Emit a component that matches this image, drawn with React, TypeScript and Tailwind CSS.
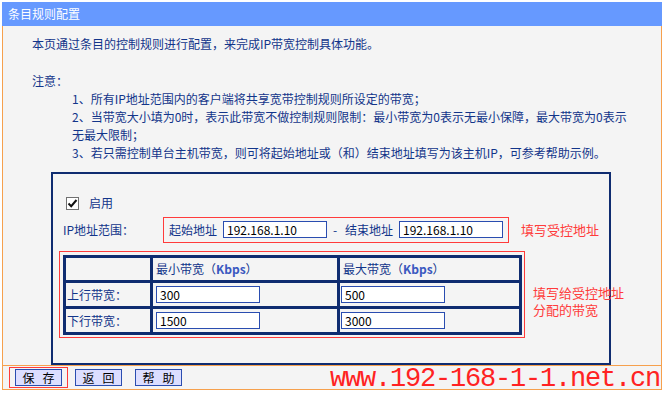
import React from "react";

const navy = "text-[#12358A]";

function Field({ value, w = "w-[104px]" }: { value: string; w?: string }) {
    return (
        <input
            readOnly
            value={value}
            className={`h-[17px] ${w} border border-[#2A4DB0] bg-white px-[3px] text-[12px] leading-[15px] text-black outline-none`}
        />
    );
}

function Btn({ a, b }: { a: string; b: string }) {
    return (
        <button className="flex h-[17px] w-[47px] items-center justify-center gap-[8px] border border-[#2A4DB0] bg-[#DCDEFF] text-[12px] leading-none text-black">
            <span>{a}</span>
            <span>{b}</span>
        </button>
    );
}

export default function App() {
    return (
        <div className="relative h-[395px] w-[664px] overflow-hidden bg-white font-['Noto_Sans_CJK_SC',sans-serif] text-[12px]">
            <div className="ml-[2px] mt-[2px] w-[660px]">
                {/* title bar */}
                <div className="flex h-[24px] items-center bg-[#6699FF] pl-[6px] text-[12px] text-white">
                    条目规则配置
                </div>

                {/* body */}
                <div className={`border-l border-r border-[#F6A04D] bg-[#F4F4F4] pt-[9px] ${navy}`}>
                    <div className="pl-[29px] leading-[18px]">
                        本页通过条目的控制规则进行配置，来完成IP带宽控制具体功能。
                    </div>
                    <div className="mt-[19px] pl-[29px] leading-[18px]">注意：</div>
                    <div className="whitespace-nowrap pl-[69px] leading-[18px]">
                        <div>1、所有IP地址范围内的客户端将共享宽带控制规则所设定的带宽；</div>
                        <div>
                            2、当带宽大小填为0时，表示此带宽不做控制规则限制：最小带宽为0表示无最小保障，最大带宽为0表示
                        </div>
                        <div>无最大限制；</div>
                        <div>3、若只需控制单台主机带宽，则可将起始地址或（和）结束地址填写为该主机IP，可参考帮助示例。</div>
                    </div>

                    {/* rule box */}
                    <div className="ml-[48px] mt-[10px] w-[560px] border-2 border-[#0F2C70] pb-[25px] pt-[20px]">
                        <div className="flex h-[18px] items-center pl-[13px]">
                            <span className="flex h-[13px] w-[13px] items-center justify-center border border-[#707070] bg-white">
                                <svg width="11" height="11" viewBox="0 0 11 11">
                                    <path d="M1.5 5.5 L4.2 8.2 L9.5 2" fill="none" stroke="#111" strokeWidth="2" />
                                </svg>
                            </span>
                            <span className="ml-[10px]">启用</span>
                        </div>

                        <div className="mt-[5px] flex items-center">
                            <span className="ml-[10px] w-[100px]">IP地址范围：</span>
                            <div className="flex h-[26px] w-[346px] items-center border border-[#FF3B3B] pl-[5px]">
                                <span>起始地址</span>
                                <span className="ml-[6px]"><Field value="192.168.1.10" /></span>
                                <span className="ml-[6px] w-[12px]">-</span>
                                <span>结束地址</span>
                                <span className="ml-[6px]"><Field value="192.168.1.10" /></span>
                            </div>
                            <span className="ml-[12px] whitespace-nowrap text-[13px] text-[#FF3B3B]">填写受控地址</span>
                        </div>

                        <div className="mt-[8px] flex items-start">
                            <div className="ml-[6px] shrink-0 border border-[#FF3B3B] pb-[2px] pl-[3px] pr-[2px] pt-[3px]">
                                <div className="grid w-[459px] grid-cols-[84px_184px_179px] grid-rows-[22px_23px_23px] gap-[3px] bg-[#0F2C70] p-[3px]">
                                    <div className="bg-[#F4F4F4]" />
                                    <div className="flex items-center bg-[#F4F4F4] pl-[3px]">
                                        最小带宽（<span className="font-semibold text-[#3A58C0]">Kbps</span>）
                                    </div>
                                    <div className="flex items-center bg-[#F4F4F4] pl-[3px]">
                                        最大带宽（<span className="font-semibold text-[#3A58C0]">Kbps</span>）
                                    </div>
                                    <div className="flex items-center bg-[#F4F4F4] pl-[1px]">上行带宽：</div>
                                    <div className="flex items-center bg-[#F4F4F4] pl-[3px]"><Field value="300" /></div>
                                    <div className="flex items-center bg-[#F4F4F4] pl-[1px]"><Field value="500" /></div>
                                    <div className="flex items-center bg-[#F4F4F4] pl-[1px]">下行带宽：</div>
                                    <div className="flex items-center bg-[#F4F4F4] pl-[3px]"><Field value="1500" /></div>
                                    <div className="flex items-center bg-[#F4F4F4] pl-[1px]"><Field value="3000" /></div>
                                </div>
                            </div>
                            <div className="ml-[8px] mt-[33px] shrink-0 whitespace-nowrap text-[13px] leading-[17px] text-[#FF3B3B]">
                                填写给受控地址
                                <br />
                                分配的带宽
                            </div>
                        </div>
                    </div>
                </div>

                {/* buttons */}
                <div className="flex h-[25px] items-start border border-[#F6A04D] bg-[#F4F4F4]">
                    <div className="ml-[6px] mt-[1px] border border-[#FF3B3B] px-[5px] py-[1px]">
                        <Btn a="保" b="存" />
                    </div>
                    <div className="ml-[7px] mt-[3px]">
                        <Btn a="返" b="回" />
                    </div>
                    <div className="ml-[13px] mt-[3px]">
                        <Btn a="帮" b="助" />
                    </div>
                </div>
            </div>

            {/* watermark */}
            <div className="absolute left-[330px] top-[366px] whitespace-nowrap font-['Liberation_Mono',monospace] text-[27px] leading-[27px] tracking-[-1.2px] text-[#FF2222]">
                www.192-168-1-1.net.cn
            </div>
        </div>
    );
}
